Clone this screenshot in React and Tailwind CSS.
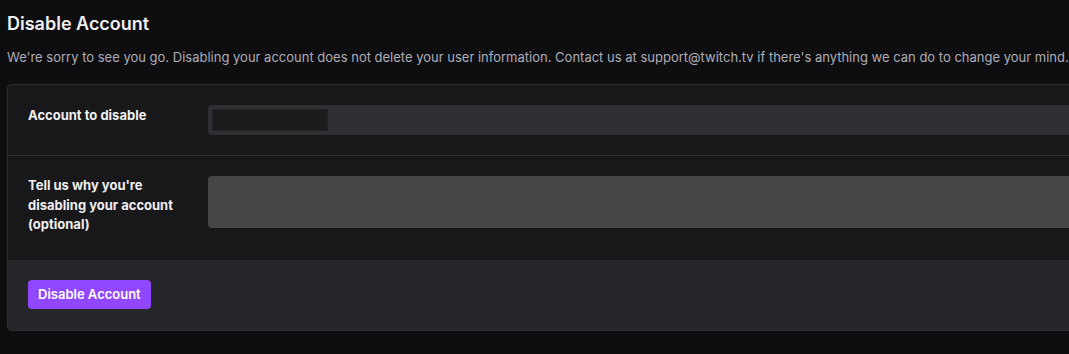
import React from 'react'

const App = () => {
    return (
        <div className="w-[1069px] h-[354px] overflow-hidden bg-[#0e0e10] text-[#efeff1]" style={{ fontFamily: 'Inter, "Noto Sans", sans-serif' }}>
            <div className="w-[1200px] pl-[7px] pt-[12px]">
                <h2 className="text-[18px] leading-6 font-semibold text-[#efeff1]">Disable Account</h2>
                <p className="mt-[11px] text-[13px] leading-5 text-[#adadb8]">
                    We're sorry to see you go. Disabling your account does not delete your user information. Contact us at support@twitch.tv if there's anything we can do to change your mind.
                </p>
                <div className="mt-[17px] border border-[#2f2f35] rounded-[4px] bg-[#18181b] overflow-hidden">
                    <div className="flex px-5 pt-5 pb-5 border-b border-[#2f2f35]">
                        <label className="w-[180px] shrink-0 text-[13px] leading-5 font-bold">Account to disable</label>
                        <div className="flex-1 h-[30px] rounded-[4px] bg-[#2f2f33] p-[4px]">
                            <div className="w-[116px] h-[22px] bg-[#1c1c1f] border border-[#232326]"></div>
                        </div>
                    </div>
                    <div className="flex px-5 pt-5 h-[104px]">
                        <label className="w-[180px] shrink-0 text-[13px] leading-[19.5px] font-bold">
                            Tell us why you're<br />disabling your account<br />(optional)
                        </label>
                        <div className="flex-1 h-[52px] rounded-[4px] bg-[#464649]"></div>
                    </div>
                    <div className="bg-[#26262b] px-5 pt-5 h-[70px]">
                        <button className="h-[29px] px-[10px] rounded-[4px] bg-[#9147ff] text-white text-[13px] font-semibold">
                            Disable Account
                        </button>
                    </div>
                </div>
            </div>
        </div>
    )
}

export default App
